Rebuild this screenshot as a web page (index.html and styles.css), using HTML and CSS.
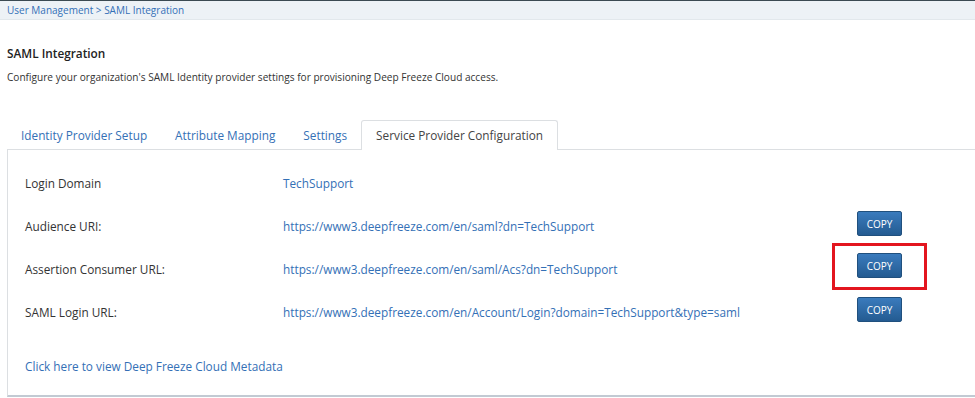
FILE: index.html
```html
<!DOCTYPE html>
<html lang="en">
<head>
    <meta charset="UTF-8">
    <title>SAML Integration</title>
    <link rel="stylesheet" href="styles.css">
</head>
<body>
    <div class="crumbs">
        <a href="#">User Management</a> &gt; <a href="#">SAML Integration</a>
    </div>
    <div class="page">
        <h2>SAML Integration</h2>
        <p class="intro">Configure your organization's SAML Identity provider settings for provisioning Deep Freeze Cloud access.</p>

        <ul class="tabs">
            <li><a href="#">Identity Provider Setup</a></li>
            <li><a href="#">Attribute Mapping</a></li>
            <li><a href="#">Settings</a></li>
            <li class="active"><a href="#">Service Provider Configuration</a></li>
        </ul>

        <div class="panel">
            <div class="rows">
                <div class="label">Login Domain</div>
                <div class="value"><a href="#">TechSupport</a></div>
                <div class="act"></div>

                <div class="label">Audience URI:</div>
                <div class="value"><a href="#">https://www3.deepfreeze.com/en/saml?dn=TechSupport</a></div>
                <div class="act"><button class="copy">COPY</button></div>

                <div class="label">Assertion Consumer URL:</div>
                <div class="value"><a href="#">https://www3.deepfreeze.com/en/saml/Acs?dn=TechSupport</a></div>
                <div class="act"><span class="mark"><button class="copy">COPY</button></span></div>

                <div class="label">SAML Login URL:</div>
                <div class="value"><a href="#">https://www3.deepfreeze.com/en/Account/Login?domain=TechSupport&amp;type=saml</a></div>
                <div class="act"><button class="copy">COPY</button></div>
            </div>
            <a class="meta" href="#">Click here to view Deep Freeze Cloud Metadata</a>
        </div>
    </div>
</body>
</html>
```

FILE: styles.css
```css
body {
    margin: 0;
    font-family: "Open Sans", "Noto Sans", sans-serif;
    color: #333;
    background: #fff;
}
a {
    color: #3470b6;
    text-decoration: none;
}
.crumbs {
    height: 18px;
    line-height: 18px;
    padding-left: 7px;
    font-size: 10px;
    color: #3470b6;
    background: #edf2f6;
    border-top: 1px solid #3b4a52;
    border-bottom: 1px solid #e2e8ec;
}
.page {
    padding-left: 7px;
}
h2 {
    margin: 0;
    padding-top: 24px;
    font-size: 11.8px;
    font-weight: 600;
    line-height: 18px;
    color: #222;
}
.intro {
    margin: 6px 0 0;
    font-size: 10.1px;
    line-height: 18px;
    color: #333;
}
.tabs {
    list-style: none;
    margin: 34px 0 0;
    padding: 0;
    display: flex;
    height: 30px;
}
.tabs li {
    padding: 0 14px;
    line-height: 30px;
    font-size: 11.8px;
}
.tabs li a {
    color: #3470b6;
}
.tabs li.active {
    background: #fff;
    border: 1px solid #dcdfe2;
    border-bottom: none;
    border-radius: 3px 3px 0 0;
    line-height: 29px;
    position: relative;
    z-index: 1;
    height: 30px;
    box-sizing: border-box;
}
.tabs li.active a {
    color: #444;
}
.panel {
    border-top: 1px solid #dcdfe2;
    border-left: 1px solid #dcdfe2;
    border-bottom: 2px solid #c2cad3;
    height: 248px;
    box-sizing: border-box;
    padding: 11px 0 0 17px;
    margin-top: -1px;
}
.rows {
    display: grid;
    grid-template-columns: 258px 574px 45px;
    grid-auto-rows: 43px;
    align-items: center;
    font-size: 11.8px;
}
.label {
    color: #333;
}
.act {
    display: flex;
    justify-content: center;
}
.copy {
    width: 45px;
    height: 25px;
    padding: 0;
    border: 1px solid #20507e;
    border-radius: 2px;
    background: linear-gradient(#3a7bbd, #245b91);
    color: #fff;
    font-family: "Open Sans", sans-serif;
    font-size: 10px;
    margin-top: -4px;
}
.mark {
    display: flex;
    padding: 7px 22px 9px;
    border: 3px solid #e3161f;
    margin-top: -4px;
}
.mark .copy {
    margin-top: 0;
}
.meta {
    display: block;
    margin-top: 25px;
    font-size: 11.8px;
}
```
